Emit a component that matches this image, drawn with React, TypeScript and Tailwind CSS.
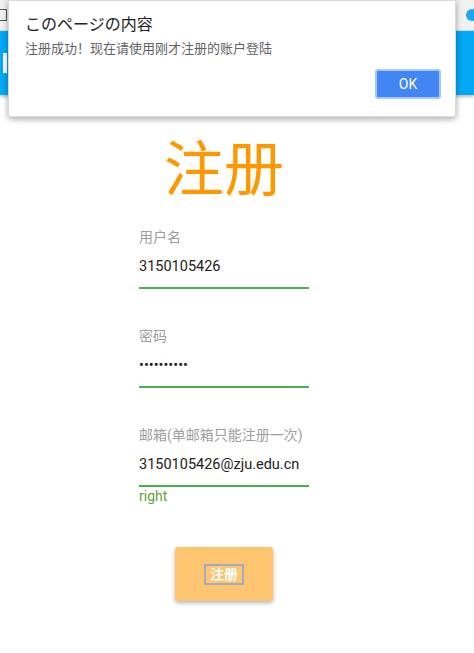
import React from 'react';

const cjk = { fontFamily: 'Roboto, "Noto Sans CJK SC", sans-serif' };

const Field = ({ label, value, extra }: { label: string; value: string; extra?: string }) => (
  <div className="w-[170px] flex flex-col">
    <label className="text-[14px] leading-[20px] text-[#9e9e9e]">{label}</label>
    <div className="mt-[10px] h-[32px] pt-[1px] border-b-2 border-[#4caf50] text-[14.5px] leading-[18px] text-[#212121]">
      {value}
    </div>
    {extra && <div className="text-[14px] leading-[18px] text-[#689f38]">{extra}</div>}
  </div>
);

export default function App() {
  return (
    <div className="relative w-[474px] h-[653px] bg-white overflow-hidden" style={cjk}>
      {/* browser strip */}
      <div className="h-[31px] bg-[#f1f1f1] border-b border-[#d6d6d6] flex items-center justify-between">
        <span className="w-[7px] h-[12px] border border-[#555] border-l-0 rounded-r-[1px]" />
        <span className="mr-[-4px] w-[12px] h-[12px] rounded-full bg-[#1ea7f0]" />
      </div>
      {/* app bar */}
      <div className="h-[64px] bg-[#03a9f4] shadow-[0_2px_3px_rgba(0,0,0,0.25)] flex items-center">
        <span className="ml-[3px] w-[4px] h-[20px] bg-white" />
      </div>

      {/* page */}
      <div className="w-[448px] flex flex-col items-center">
        <h1 className="mt-[40px] text-[60px] leading-[72px] text-[#ff9800]">注册</h1>
        <div className="mt-[20px] flex flex-col gap-[37px]">
          <Field label="用户名" value="3150105426" />
          <Field label="密码" value="••••••••••" />
          <Field label="邮箱(单邮箱只能注册一次)" value="3150105426@zju.edu.cn" extra="right" />
        </div>
        <button className="mt-[42px] w-[98px] h-[54px] rounded-[3px] bg-[#ffc46f] shadow-[0_2px_4px_rgba(0,0,0,0.3)] flex items-center justify-center">
          <span className="px-[4px] h-[21px] border-2 border-[#a3abc3] text-[14px] leading-[17px] font-bold text-white">
            注册
          </span>
        </button>
      </div>

      {/* alert dialog */}
      <div className="absolute left-[8px] top-0 w-[448px] h-[117px] bg-white rounded-b-[3px] border border-[#d9d9d9] shadow-[0_2px_6px_rgba(0,0,0,0.35)]">
        <div
          className="pl-[16px] pt-[13px] text-[16px] leading-[22px] text-[#202124]"
          style={{ fontFamily: 'Roboto, "Noto Sans CJK JP", sans-serif' }}
        >
          このページの内容
        </div>
        <div className="pl-[16px] mt-[4px] text-[13px] leading-[18px] text-[#5f6368]">
          注册成功！现在请使用刚才注册的账户登陆
        </div>
        <div className="flex justify-end pr-[14px] mt-[11px]">
          <button className="w-[66px] h-[30px] rounded-[3px] bg-[#4285f4] border-2 border-[#a8c7fa] text-white text-[14px] flex items-center justify-center">
            OK
          </button>
        </div>
      </div>
    </div>
  );
}
